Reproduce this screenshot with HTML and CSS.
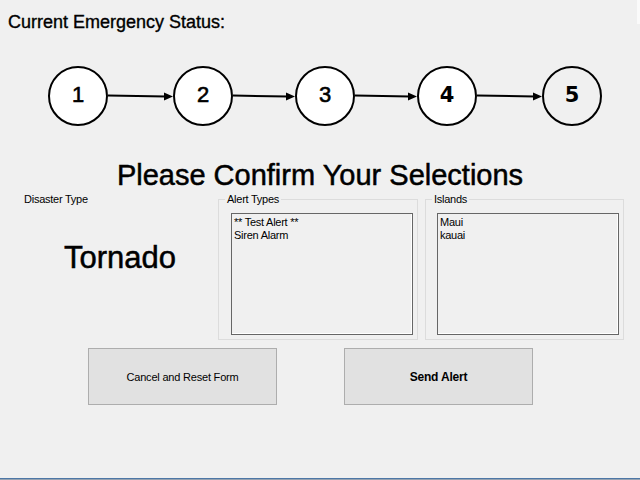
FILE: index.html
```html
<!DOCTYPE html>
<html>
<head>
<meta charset="utf-8">
<link rel="stylesheet" href="styles.css">
</head>
<body>
<div class="edge-tab"></div>
<h1 class="title">Current Emergency Status:</h1>
<svg class="steps" width="640" height="72" viewBox="0 0 640 72">
  <g class="arrows" stroke="#000" stroke-width="2" fill="#000">
    <line x1="108" y1="35.5" x2="166" y2="36.5"/>
    <polygon points="164,32.5 173,36.5 164,40.5" stroke="none"/>
    <line x1="233" y1="35.5" x2="288" y2="36.5"/>
    <polygon points="286,32.5 295,36.5 286,40.5" stroke="none"/>
    <line x1="355" y1="35.5" x2="410" y2="36.5"/>
    <polygon points="408,32.5 417,36.5 408,40.5" stroke="none"/>
    <line x1="477" y1="35.5" x2="535" y2="36.5"/>
    <polygon points="533,32.5 542,36.5 533,40.5" stroke="none"/>
  </g>
  <g stroke="#000" stroke-width="2">
    <circle cx="78" cy="36" r="29" fill="#fff"/>
    <circle cx="203" cy="36" r="29" fill="#fff"/>
    <circle cx="325" cy="36" r="29" fill="#fff"/>
    <circle cx="447" cy="36" r="29" fill="#fff"/>
    <circle cx="572" cy="36" r="29" fill="#f0f0f0"/>
  </g>
  <g class="num" text-anchor="middle">
    <text x="78" y="42">1</text>
    <text x="203" y="42">2</text>
    <text x="325" y="42">3</text>
    <text class="alt" x="447" y="42">4</text>
    <text class="alt" x="572" y="42">5</text>
  </g>
</svg>
<h2 class="confirm">Please Confirm Your Selections</h2>
<div class="middle">
  <div class="disaster">
    <div class="small">Disaster Type</div>
    <div class="tornado">Tornado</div>
  </div>
  <fieldset class="group alerts">
    <legend class="small">Alert Types</legend>
    <div class="listbox small">
      <div>** Test Alert **</div>
      <div>Siren Alarm</div>
    </div>
  </fieldset>
  <fieldset class="group islands">
    <legend class="small">Islands</legend>
    <div class="listbox small">
      <div>Maui</div>
      <div>kauai</div>
    </div>
  </fieldset>
</div>
<div class="buttons">
  <button class="btn">Cancel and Reset Form</button>
  <button class="btn primary">Send Alert</button>
</div>
<div class="footer"></div>
</body>
</html>
```

FILE: styles.css
```css
html, body {
  margin: 0;
  padding: 0;
}
body {
  width: 640px;
  height: 480px;
  background: #f0f0f0;
  font-family: "Liberation Sans", Arial, sans-serif;
  color: #000;
  display: flex;
  flex-direction: column;
  position: relative;
  overflow: hidden;
}
.edge-tab {
  position: absolute;
  right: 0;
  top: 0;
  width: 3px;
  height: 24px;
  background: #fafafa;
}
.title {
  margin: 0;
  padding: 12px 0 0 8px;
  font-size: 18px;
  line-height: 21px;
  font-weight: normal;
  -webkit-text-stroke: 0.35px #000;
}
.steps {
  display: block;
  margin-top: 27px;
}
.num text {
  font-family: "Liberation Sans", Arial, sans-serif;
  font-size: 22px;
  stroke: #000;
  stroke-width: 0.6px;
}
.num text.alt {
  font-family: "DejaVu Sans", sans-serif;
  font-weight: bold;
  font-size: 21px;
  stroke-width: 0;
}
.confirm {
  margin: 27px 0 0 0;
  font-size: 29px;
  line-height: 32px;
  font-weight: normal;
  text-align: center;
  -webkit-text-stroke: 0.5px #000;
}
.small {
  font-size: 11px;
  line-height: 13px;
  letter-spacing: -0.25px;
}
.middle {
  display: flex;
  margin-top: 2px;
}
.disaster {
  width: 194px;
  padding-left: 24px;
}
.tornado {
  margin: 35px 0 0 40px;
  font-size: 31px;
  line-height: 34px;
  -webkit-text-stroke: 0.5px #000;
}
.group {
  margin: 0;
  min-width: 0;
  border: 1px solid #dcdcdc;
  padding: 0 4px 4px 12px;
  box-sizing: border-box;
}
.group legend {
  padding: 0 2px;
  margin-left: -6px;
}
.alerts {
  width: 200px;
}
.islands {
  width: 199px;
  margin-left: 7px;
  padding-left: 11px;
}
.islands legend {
  margin-left: -5px;
}
.listbox {
  margin-top: 7px;
  height: 122px;
  box-sizing: border-box;
  border: 1px solid #666;
  box-shadow: inset -1px -1px 0 #fff;
  padding: 2px 2px;
  background: #f0f0f0;
}
.buttons {
  display: flex;
  gap: 67px;
  padding-left: 88px;
  margin-top: 8px;
}
.btn {
  width: 189px;
  height: 57px;
  margin: 0;
  border: 1px solid #adadad;
  background: #e1e1e1;
  font-family: "Liberation Sans", Arial, sans-serif;
  font-size: 11px;
  letter-spacing: -0.2px;
  color: #000;
  padding: 0;
}
.btn.primary {
  font-weight: bold;
  font-size: 12px;
}
.footer {
  margin-top: auto;
  height: 1px;
  border-top: 1px solid #4d77a6;
  background: #96a3b2;
}
```
